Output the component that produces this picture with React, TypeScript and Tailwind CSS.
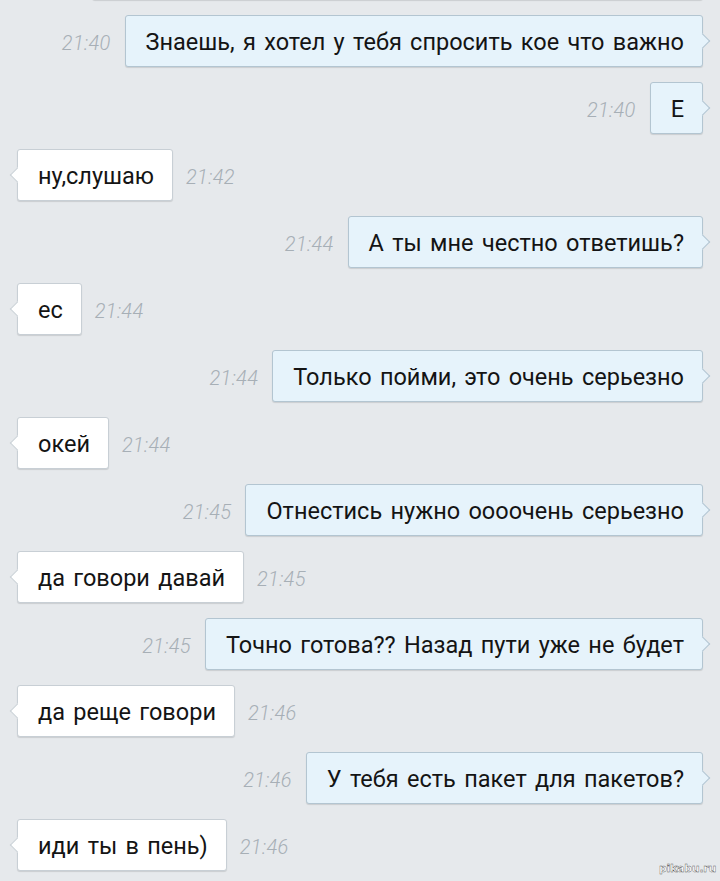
const messages = [
  { out: true, text: "Знаешь, я хотел у тебя спросить кое что важно", time: "21:40" },
  { out: true, text: "Е", time: "21:40" },
  { out: false, text: "ну,слушаю", time: "21:42" },
  { out: true, text: "А ты мне честно ответишь?", time: "21:44" },
  { out: false, text: "ес", time: "21:44" },
  { out: true, text: "Только пойми, это очень серьезно", time: "21:44" },
  { out: false, text: "окей", time: "21:44" },
  { out: true, text: "Отнестись нужно оооочень серьезно", time: "21:45" },
  { out: false, text: "да говори давай", time: "21:45" },
  { out: true, text: "Точно готова?? Назад пути уже не будет", time: "21:45" },
  { out: false, text: "да реще говори", time: "21:46" },
  { out: true, text: "У тебя есть пакет для пакетов?", time: "21:46" },
  { out: false, text: "иди ты в пень)", time: "21:46" },
];

function Bubble({ out, children, className = "" }: { out: boolean; children?: React.ReactNode; className?: string }) {
  return (
    <div
      className={
        "relative h-[52px] flex items-center pl-5 pr-[18px] pt-[3px] rounded-[3px] border shadow-[0_1px_1px_rgba(0,0,0,0.12)] " +
        (out ? "bg-[#e6f3fb] border-[#b3c5d1] " : "bg-white border-[#c8cfd5] ") +
        className
      }
    >
      {/* tail */}
      <span
        className={
          "absolute top-1/2 -translate-y-1/2 w-[11px] h-[11px] rotate-45 " +
          (out
            ? "right-[-6px] bg-[#e6f3fb] border-t border-r border-[#b3c5d1]"
            : "left-[-6px] bg-white border-b border-l border-[#c8cfd5]")
        }
      />
      <span className="relative text-[23.5px] [word-spacing:2.5px] text-[#141414] whitespace-nowrap">{children}</span>
    </div>
  );
}

function Time({ t }: { t: string }) {
  return <span className="pt-[3px] text-[20px] italic font-light tracking-[0.3px] text-[#a7afb6]">{t}</span>;
}

export default function App() {
  return (
    <div
      className="relative w-[720px] h-[881px] overflow-hidden bg-[#e6e9ec]"
      style={{ fontFamily: "Roboto, 'Noto Sans', sans-serif" }}
    >
      <div className="flex flex-col gap-[15px]">
        {/* previous message, mostly scrolled away */}
        <div className="flex justify-end pr-[17px] -mt-[52px]">
          <Bubble out className="w-[611px]" />
        </div>
        {messages.map((m, i) =>
          m.out ? (
            <div key={i} className="flex items-center justify-end gap-[14px] pr-[17px]">
              <Time t={m.time} />
              <Bubble out>{m.text}</Bubble>
            </div>
          ) : (
            <div key={i} className="flex items-center gap-[13px] pl-[17px]">
              <Bubble out={false}>{m.text}</Bubble>
              <Time t={m.time} />
            </div>
          )
        )}
      </div>
      <span
        className="absolute right-[4px] bottom-[4px] text-[11px] font-bold text-white tracking-tight"
        style={{ fontFamily: "'DejaVu Sans', sans-serif", WebkitTextStroke: "0.4px #555" }}
      >
        pikabu.ru
      </span>
    </div>
  );
}
